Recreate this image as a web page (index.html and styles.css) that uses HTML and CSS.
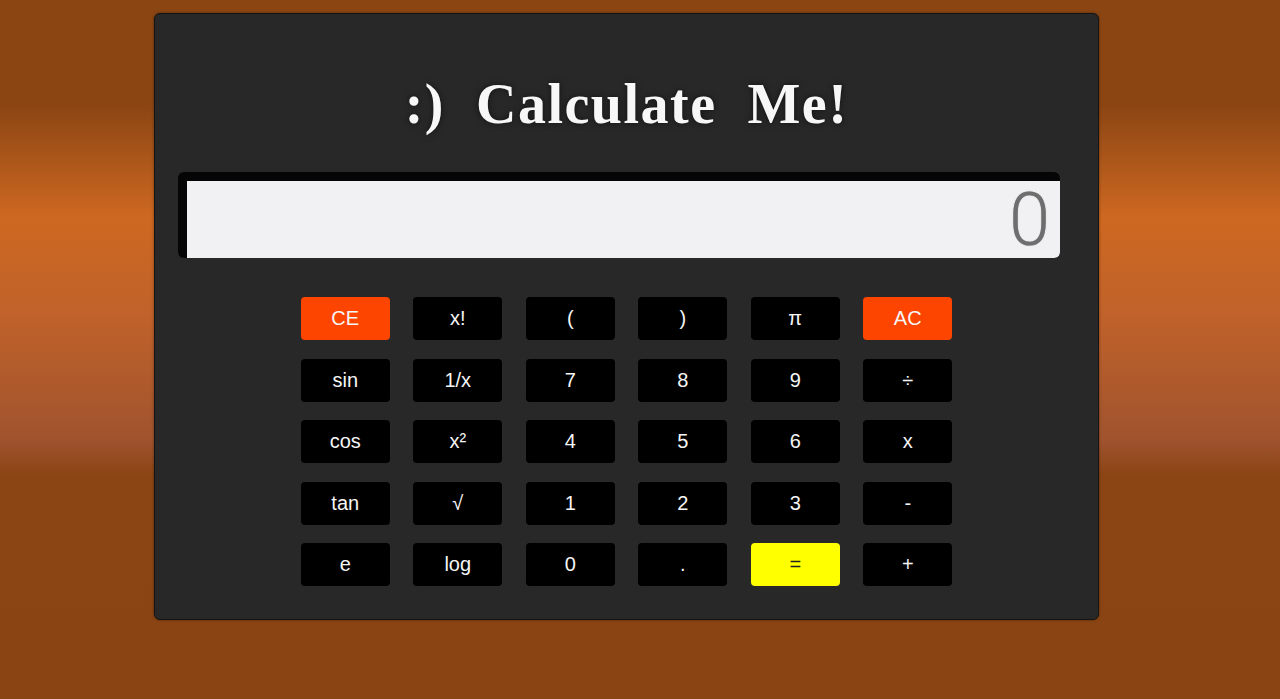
FILE: index.html
```html
<!DOCTYPE html>
<html>
<head>
<meta charset="utf-8">
<link rel="stylesheet" href="styles.css">
</head>
<body>
<div class="calc">
  <h1 class="title">:)&nbsp; Calculate&nbsp; Me!</h1>
  <div class="display">0</div>
  <div class="keys">
    <button class="key red">CE</button>
    <button class="key">x!</button>
    <button class="key">(</button>
    <button class="key">)</button>
    <button class="key">π</button>
    <button class="key red">AC</button>

    <button class="key">sin</button>
    <button class="key">1/x</button>
    <button class="key">7</button>
    <button class="key">8</button>
    <button class="key">9</button>
    <button class="key">÷</button>

    <button class="key">cos</button>
    <button class="key">x²</button>
    <button class="key">4</button>
    <button class="key">5</button>
    <button class="key">6</button>
    <button class="key">x</button>

    <button class="key">tan</button>
    <button class="key">√</button>
    <button class="key">1</button>
    <button class="key">2</button>
    <button class="key">3</button>
    <button class="key">-</button>

    <button class="key">e</button>
    <button class="key">log</button>
    <button class="key">0</button>
    <button class="key">.</button>
    <button class="key yellow">=</button>
    <button class="key">+</button>
  </div>
</div>
</body>
</html>
```
FILE: styles.css
```css
html, body {
  margin: 0;
  height: 100%;
}
body {
  background: linear-gradient(to bottom, #8a4512 0%, #8b4513 15%, #cd6821 31%, #c0622a 45%, #a0532e 63%, #8b4514 68%, #8a4414 100%);
  overflow: hidden;
  padding-top: 13px;
  box-sizing: border-box;
}
.calc {
  margin-left: 154px;
  width: 945px;
  height: 607px;
  box-sizing: border-box;
  background: #282828;
  border: 1px solid #141414;
  border-radius: 6px;
  padding: 0 0 0 23px;
  box-shadow: 0 0 3px rgba(0,0,0,0.4);
}
.title {
  margin: 0 0 0 -23px;
  padding: 58px 0 0 0;
  height: 158px;
  box-sizing: border-box;
  font-family: "Liberation Serif", "Times New Roman", serif;
  font-weight: bold;
  font-size: 56px;
  line-height: 64px;
  letter-spacing: 1.5px;
  color: #f7f7f7;
  text-align: center;
  text-shadow: 0 0 6px rgba(0,0,0,0.6);
}
.display {
  width: 882px;
  height: 86px;
  box-sizing: border-box;
  background: #f1f1f3;
  border-top: 9px solid #050505;
  border-left: 9px solid #050505;
  border-radius: 6px;
  font-family: Roboto, "Liberation Sans", sans-serif;
  font-weight: 300;
  font-size: 74px;
  line-height: 77px;
  color: #6e6e6e;
  text-align: right;
  padding-right: 10px;
  text-shadow: 0 0 1px #999;
}
.keys {
  display: grid;
  grid-template-columns: repeat(6, 89px);
  grid-auto-rows: 43px;
  column-gap: 23.5px;
  row-gap: 18.5px;
  justify-content: center;
  margin: 39px 0 0 -23px;
}
.key {
  background: #000;
  border: none;
  border-radius: 4px;
  color: #f5f5f5;
  font-family: "Liberation Sans", Arial, sans-serif;
  font-size: 20px;
  padding: 0;
  margin: 0;
}
.key.red {
  background: #fe4500;
}
.key.yellow {
  background: #ffff00;
  color: #222;
}
```
